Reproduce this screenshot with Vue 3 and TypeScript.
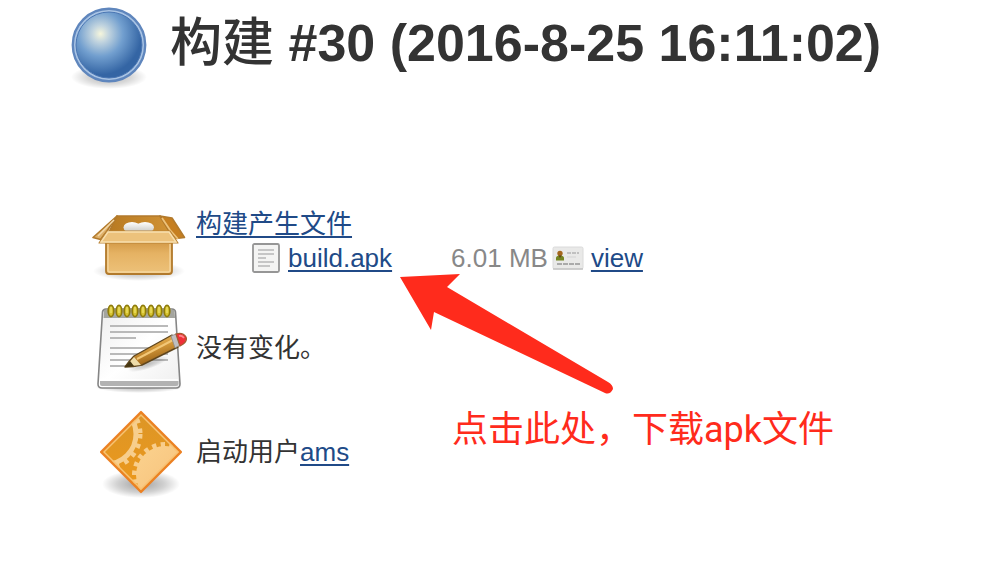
<script setup lang="ts">
interface Artifact {
  name: string
  size: string
}

const build = { number: 30, time: '2016-8-25 16:11:02', user: 'ams' }
const artifacts: Artifact[] = [{ name: 'build.apk', size: '6.01 MB' }]
const rings = [19, 27, 35, 43, 51, 59, 67, 75]
const padLines = [
  { y: 26, end: 76 },
  { y: 32, end: 76 },
  { y: 38, end: 44 },
  { y: 48, end: 76 },
  { y: 54, end: 76 },
  { y: 60, end: 76 },
  { y: 66, end: 44 },
]
</script>

<template>
  <main class="page">
    <header class="header">
      <svg class="ball" viewBox="0 0 80 88" aria-hidden="true">
        <defs>
          <radialGradient id="ball-fill" cx="0.37" cy="0.33" r="0.62">
            <stop offset="0" stop-color="#f6f6dc" />
            <stop offset="0.2" stop-color="#c3d5df" />
            <stop offset="0.55" stop-color="#729fcf" />
            <stop offset="1" stop-color="#3465a4" />
          </radialGradient>
          <radialGradient id="soft-shadow">
            <stop offset="0" stop-color="#000" stop-opacity="0.5" />
            <stop offset="0.6" stop-color="#000" stop-opacity="0.24" />
            <stop offset="1" stop-color="#000" stop-opacity="0" />
          </radialGradient>
        </defs>
        <ellipse cx="41" cy="73" rx="38" ry="12" fill="url(#soft-shadow)" opacity="0.6" />
        <circle cx="41" cy="41" r="36.2" fill="#a9c4e4" stroke="#5f86bd" stroke-width="2.4" />
        <circle cx="41" cy="41" r="33" fill="url(#ball-fill)" stroke="#4a76b3" stroke-width="1" />
      </svg>
      <h1 class="title"><span class="title-word">构建</span> #{{ build.number }} ({{ build.time }})</h1>
    </header>

    <section class="summary">
      <div class="row">
        <svg class="icon" viewBox="0 0 96 96" aria-hidden="true">
          <defs>
            <linearGradient id="box-front" x1="0" y1="0" x2="0" y2="1">
              <stop offset="0" stop-color="#d39a48" />
              <stop offset="0.35" stop-color="#e5b263" />
              <stop offset="1" stop-color="#edc27a" />
            </linearGradient>
            <linearGradient id="box-inside" x1="0" y1="0" x2="1" y2="0">
              <stop offset="0" stop-color="#b87a22" />
              <stop offset="1" stop-color="#d09235" />
            </linearGradient>
            <linearGradient id="peanut" x1="0" y1="0" x2="0" y2="1">
              <stop offset="0" stop-color="#fff" />
              <stop offset="1" stop-color="#c5c5c0" />
            </linearGradient>
          </defs>
          <ellipse cx="47" cy="75" rx="46" ry="10" fill="url(#soft-shadow)" opacity="0.6" />
          <path d="M25 20H68L78 36H17Z" fill="url(#box-inside)" stroke="#b27a2c" stroke-width="1.6" />
          <ellipse cx="40" cy="31.5" rx="8.5" ry="5.5" fill="url(#peanut)" />
          <ellipse cx="53" cy="31.5" rx="9" ry="5.5" fill="url(#peanut)" />
          <path d="M25 20L1 41.5L8.5 43.5L15 35Z" fill="#dfb16a" stroke="#b27a2c" stroke-width="1.6" stroke-linejoin="round" />
          <path d="M22 24L6 40" stroke="#f3d8a8" stroke-width="1.4" />
          <path d="M68 20L80 22L92.5 41.5L84 42.5L77 35Z" fill="#c67f20" stroke="#b27a2c" stroke-width="1.6" stroke-linejoin="round" />
          <path d="M70 22L78 34L86 43" fill="none" stroke="#edc27a" stroke-width="1.8" />
          <path d="M14 46H80V75Q80 78 77 78H17Q14 78 14 75Z" fill="url(#box-front)" stroke="#b27a2c" stroke-width="1.8" />
          <path d="M16 48V74Q16 76 18 76H76Q78 76 78 74V48" fill="none" stroke="#f5d69f" stroke-width="1.4" />
          <path d="M15 35H78L86 47H7Z" fill="#ecc27c" stroke="#b98336" stroke-width="1.2" stroke-linejoin="round" />
          <path d="M16 36H77L84 46H9Z" fill="none" stroke="#f8dfae" stroke-width="1.4" />
        </svg>
        <div class="detail">
          <a class="link" href="#artifacts">构建产生文件</a>
          <ul class="files">
            <li v-for="file in artifacts" :key="file.name" class="file">
              <svg class="file-icon" viewBox="0 0 28 30" aria-hidden="true">
                <rect x="1" y="1" width="26" height="28" rx="1.5" fill="#f4f4f3" stroke="#969696" stroke-width="1.8" />
                <path d="M6 7H22M6 11H22M6 15H14M6 19H22M6 23H18" stroke="#c6c6c6" stroke-width="1.8" />
              </svg>
              <a class="link file-name" :href="'#' + file.name">{{ file.name }}</a>
              <span class="size">{{ file.size }}</span>
              <svg class="card-icon" viewBox="0 0 32 24" aria-hidden="true">
                <rect x="1" y="1" width="30" height="22" rx="1.5" fill="#e9e9e8" stroke="#dadada" />
                <path d="M1 23H31" stroke="#c2c2c2" stroke-width="1.4" />
                <circle cx="8" cy="7.5" r="2.7" fill="#a4661c" />
                <path d="M4 14.5V12Q4 9.5 8 9.5Q12 9.5 12 12V14.5Z" fill="#758522" />
                <path d="M6.5 9.5H9.5L8 12Z" fill="#62401a" />
                <path d="M15 7H27" stroke="#b3b3b3" stroke-width="1.6" stroke-dasharray="4 1" />
                <path d="M15 11H24" stroke="#d3d3d3" stroke-width="1" />
                <path d="M5 18H28" stroke="#aaa" stroke-width="2" stroke-dasharray="5 1" />
              </svg>
              <a class="link" href="#view">view</a>
            </li>
          </ul>
        </div>
      </div>

      <div class="row">
        <svg class="icon" viewBox="0 0 96 96" aria-hidden="true">
          <defs>
            <linearGradient id="paper" x1="0" y1="0" x2="1" y2="1">
              <stop offset="0" stop-color="#ededed" />
              <stop offset="0.5" stop-color="#fff" />
              <stop offset="1" stop-color="#eee" />
            </linearGradient>
            <linearGradient id="pencil" x1="0" y1="0" x2="0.4" y2="1">
              <stop offset="0" stop-color="#efc36e" />
              <stop offset="0.5" stop-color="#d59a3b" />
              <stop offset="1" stop-color="#935b12" />
            </linearGradient>
          </defs>
          <ellipse cx="47" cy="87" rx="44" ry="6" fill="url(#soft-shadow)" opacity="0.6" />
          <path d="M14 9H80Q83 9 83.5 12L88 84Q88 88 84 88H10Q6 88 6 84L10.500 12Q11 9 14 9Z" fill="url(#paper)" stroke="#858585" stroke-width="1.6" />
          <path d="M12 10H82.500L83 18H11.500Z" fill="#a4a59f" />
          <path d="M8 81H86.500V84Q86.500 86 84 86H10Q8 86 8 84Z" fill="#b2b2b2" />
          <path d="M8 80H86" stroke="#fff" stroke-width="1.4" />
          <path v-for="line in padLines" :key="line.y" :d="`M18 ${line.y}H${line.end}`" stroke="#b9b9b9" stroke-width="2" />
          <g v-for="x in rings" :key="x">
            <ellipse :cx="x" cy="11" rx="2.8" ry="5.6" fill="#d7c42f" stroke="#8f7c0c" stroke-width="1.7" />
            <path :d="`M${x} 7V13`" stroke="#efe372" stroke-width="1.2" />
          </g>
          <ellipse cx="56" cy="64" rx="21" ry="5" fill="url(#soft-shadow)" opacity="0.5" transform="rotate(-18 56 64)" />
          <path d="M42 56L80 35L86 47L50 65Q41 67 33 67Q37 61 42 56Z" fill="url(#pencil)" stroke="#5f461e" stroke-width="1.4" stroke-linejoin="round" />
          <path d="M42 57L49 65Q41 66 35 66Q38 61 42 57Z" fill="#eedca9" />
          <path d="M33 67L38 61L42 66Z" fill="#453713" />
          <path d="M45 59L81 40" stroke="#f2c777" stroke-width="2" />
          <path d="M79 36L84 34L88 45L83 48Z" fill="#bfbfc1" stroke="#928b87" stroke-width="0.8" />
          <path d="M84 34Q91 32 94 37Q96 42 88 46Z" fill="#ef2f38" stroke="#a35b2f" stroke-width="1.3" />
          <path d="M87 36Q90 35 92 38" fill="none" stroke="#ff8588" stroke-width="1.8" />
        </svg>
        <p class="detail">没有变化。</p>
      </div>

      <div class="row">
        <svg class="icon" viewBox="0 0 96 96" aria-hidden="true">
          <defs>
            <clipPath id="diamond-clip"><path d="M49 10L87 48L49 86L11 48Z" /></clipPath>
            <linearGradient id="diamond-fill" x1="0" y1="0" x2="0" y2="1">
              <stop offset="0" stop-color="#dc9627" />
              <stop offset="1" stop-color="#ed981b" />
            </linearGradient>
            <linearGradient id="gear-fill" x1="0" y1="0" x2="1" y2="1">
              <stop offset="0" stop-color="#fbd28e" />
              <stop offset="1" stop-color="#f5bd76" />
            </linearGradient>
          </defs>
          <ellipse cx="49" cy="80" rx="39" ry="14" fill="url(#soft-shadow)" opacity="0.75" />
          <path d="M49 8L89 48L49 88L9 48Z" fill="url(#diamond-fill)" />
          <g clip-path="url(#diamond-clip)">
            <circle cx="14" cy="30" r="30" fill="none" stroke="#f7ce8d" stroke-width="5" />
            <circle cx="14" cy="30" r="34" fill="none" stroke="#f7ce8d" stroke-width="5" stroke-dasharray="4.4 5.500" />
            <circle cx="73" cy="71" r="29" fill="url(#gear-fill)" />
            <circle cx="73" cy="71" r="30.5" fill="none" stroke="#f8cd8b" stroke-width="5" stroke-dasharray="4.300 4.400" />
          </g>
          <path d="M49 11L86 48L49 85L12 48Z" fill="none" stroke="#f8c274" stroke-width="1.5" />
          <path d="M49 8L89 48L49 88L9 48Z" fill="none" stroke="#ec8123" stroke-width="2.2" stroke-linejoin="round" />
        </svg>
        <p class="detail">启动用户<a class="link" href="#user">{{ build.user }}</a></p>
      </div>
    </section>

    <svg class="arrow" viewBox="0 0 216 126" aria-hidden="true">
      <path d="M0 5L60 2L47 15L208 110Q213 113 213 117Q210 123 205 121L34 40L31 58Z" fill="#ff2b1c" />
    </svg>
    <p class="note">点击此处，下载apk文件</p>
  </main>
</template>

<style>
body {
  margin: 0;
  background: #fff;
}
</style>

<style scoped>
.page {
  position: relative;
  padding: 4px 0 24px;
  color: #333;
  font-family: "Liberation Sans", "Noto Sans CJK SC", sans-serif;
  font-size: 26px;
  line-height: 34px;
}

.header {
  display: flex;
  align-items: flex-start;
  gap: 22px;
  padding-left: 68px;
  margin-bottom: 104px;
}

.ball {
  flex: none;
  width: 80px;
  height: 88px;
}

.title {
  margin: 0;
  font-size: 52px;
  line-height: 78px;
  font-weight: 700;
  white-space: nowrap;
}

.title-word {
  font-weight: 500;
}

.summary {
  display: flex;
  flex-direction: column;
  gap: 8px;
  padding-left: 92px;
}

.row {
  display: flex;
  align-items: center;
  gap: 8px;
}

.icon {
  flex: none;
  width: 96px;
  height: 96px;
}

.detail {
  margin: 0;
}

div.detail {
  padding-bottom: 6px;
}

.link {
  color: #204a87;
  text-decoration: underline;
  text-decoration-thickness: 2px;
  text-decoration-skip-ink: none;
  text-underline-offset: 3px;
}

.files {
  margin: 0;
  padding: 0 0 0 56px;
  list-style: none;
}

.file {
  display: flex;
  align-items: center;
  white-space: nowrap;
}

.file-icon {
  width: 28px;
  height: 30px;
  margin-right: 8px;
}

.file-name {
  margin-right: 59px;
}

.size {
  color: #888;
}

.card-icon {
  width: 32px;
  height: 24px;
  margin: 0 7px 0 4px;
}

.arrow {
  position: absolute;
  left: 400px;
  top: 272px;
  width: 216px;
  height: 126px;
}

.note {
  position: absolute;
  left: 452px;
  top: 406px;
  margin: 0;
  color: #ff2b1c;
  font-family: Roboto, "Noto Sans CJK SC", sans-serif;
  font-size: 36px;
  line-height: 48px;
  white-space: nowrap;
}
</style>
